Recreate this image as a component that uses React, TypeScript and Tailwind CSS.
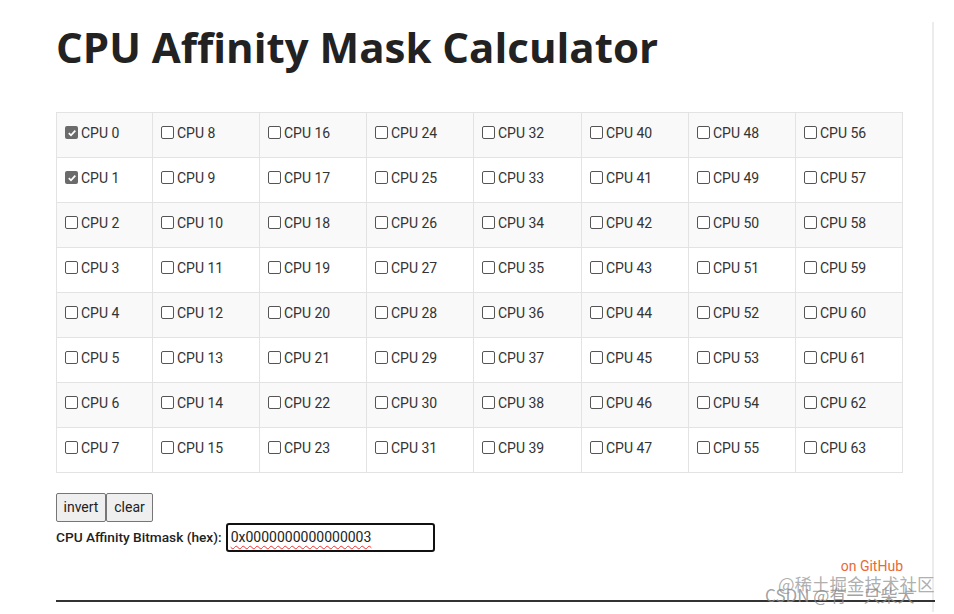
import React from "react";

function Box({ checked }: { checked: boolean }) {
  if (checked) {
    return (
      <span className="inline-flex w-[13px] h-[13px] rounded-[2px] bg-[#6b6b6b] items-center justify-center mr-[3px] shrink-0">
        <svg width="10" height="10" viewBox="0 0 10 10">
          <path d="M1.8 5.2 L4 7.3 L8.3 2.6" stroke="#fff" strokeWidth="1.8" fill="none" />
        </svg>
      </span>
    );
  }
  return <span className="inline-block w-[13px] h-[13px] rounded-[2px] border border-[#555] bg-white mr-[3px] shrink-0" />;
}

export default function App() {
  const colW = ["w-[96px]", "w-[107px]", "w-[107px]", "w-[107px]", "w-[108px]", "w-[107px]", "w-[107px]", "w-[107px]"];
  const rows = Array.from({ length: 8 }, (_, r) => r);
  return (
    <div className="relative w-[954px] h-[614px] bg-white overflow-hidden" style={{ fontFamily: "Roboto, 'Liberation Sans', sans-serif" }}>
      <div className="ml-0 mt-[24px] w-[934px] h-[590px] border-r-[2px] border-[#ececec]">
        <div className="pl-[56px]">
          <h1 className="text-[42px] leading-[50px] font-bold text-[#222] -mt-[2px]" style={{ fontFamily: "'Open Sans', sans-serif" }}>
            CPU Affinity Mask Calculator
          </h1>
          <div className="mt-[40px] w-[847px] border-l border-t border-[#e3e3e3]">
            {rows.map((r) => (
              <div key={r} className={`flex h-[45px] ${r % 2 === 0 ? "bg-[#f9f9f9]" : "bg-white"}`}>
                {colW.map((w, c) => {
                  const n = c * 8 + r;
                  return (
                    <div key={c} className={`${w} border-r border-b border-[#e3e3e3] flex items-start pl-[8px] pt-[13px] text-[14px] leading-[16px] text-[#333]`}>
                      <Box checked={n < 2} />
                      <span className="-mt-[1px]">CPU {n}</span>
                    </div>
                  );
                })}
              </div>
            ))}
          </div>
          <div className="flex mt-[20px]">
            <button className="h-[29px] w-[50px] bg-[#efefef] border border-[#767676] rounded-[2px] text-[14px] text-[#222]">invert</button>
            <button className="h-[29px] w-[47px] bg-[#efefef] border border-[#767676] rounded-[2px] text-[14px] text-[#222]">clear</button>
          </div>
          <div className="flex items-center mt-[1px]">
            <span className="text-[13.7px] font-medium text-[#222] mr-[4px]">CPU Affinity Bitmask (hex):</span>
            <div className="w-[209px] h-[29px] border-[2px] border-[#111] rounded-[3px] flex items-center pl-[3px] text-[14px] text-[#222]">
              <span className="underline decoration-wavy decoration-[#e33] decoration-1 underline-offset-[3px]">0x0000000000000003</span>
            </div>
          </div>
          <div className="w-[847px] flex justify-end mt-[4px]">
            <span className="text-[14px] leading-[20px] text-[#e8683a]">on GitHub</span>
          </div>
          <div className="mt-[24px] w-[879px] h-[2px] bg-[#333]" />
        </div>
      </div>
      <div className="absolute left-[778px] top-[574px] text-[17.5px] leading-[20px] text-[#9a9a9a]/80" style={{ fontFamily: "'Noto Sans CJK SC', sans-serif" }}>
        @稀土掘金技术社区
      </div>
      <div className="absolute left-[765px] top-[585px] text-[17px] leading-[20px] text-[#8a8a8a]/80" style={{ fontFamily: "'Noto Sans CJK SC', sans-serif" }}>
        CSDN @有一只柴犬
      </div>
    </div>
  );
}
